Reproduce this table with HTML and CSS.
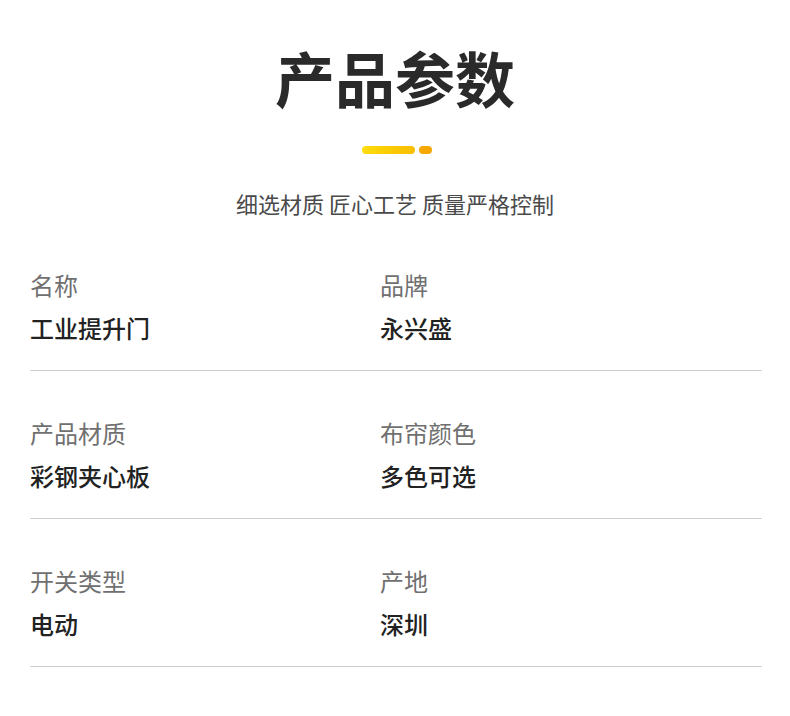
FILE: index.html
```html
<!DOCTYPE html>
<html lang="zh-CN">
<head>
<meta charset="utf-8">
<title>产品参数</title>
<link rel="stylesheet" href="styles.css">
</head>
<body>
<main class="page">
  <header class="head">
    <h1 class="title">产品参数</h1>
    <div class="deco"><span class="deco-bar"></span><span class="deco-dot"></span></div>
    <p class="subtitle">细选材质 匠心工艺 质量严格控制</p>
  </header>
  <section class="specs">
    <div class="row">
      <div class="cell"><div class="label">名称</div><div class="value">工业提升门</div></div>
      <div class="cell"><div class="label">品牌</div><div class="value">永兴盛</div></div>
    </div>
    <div class="row">
      <div class="cell"><div class="label">产品材质</div><div class="value">彩钢夹心板</div></div>
      <div class="cell"><div class="label">布帘颜色</div><div class="value">多色可选</div></div>
    </div>
    <div class="row">
      <div class="cell"><div class="label">开关类型</div><div class="value">电动</div></div>
      <div class="cell"><div class="label">产地</div><div class="value">深圳</div></div>
    </div>
  </section>
</main>
</body>
</html>
```
FILE: styles.css
```css
* { box-sizing: border-box; }
html, body { margin: 0; padding: 0; background: #fff; }
body {
  font-family: "Noto Sans CJK SC", "Noto Sans", sans-serif;
  color: #222;
}
.page { width: 790px; }
.head {
  display: flex;
  flex-direction: column;
  align-items: center;
  padding-top: 47px;
}
.title {
  margin: 0;
  font-size: 60px;
  line-height: 60px;
  font-weight: 700;
  color: #2a2a2a;
  letter-spacing: 0;
}
.deco {
  display: flex;
  gap: 4px;
  margin-top: 39px;
  margin-left: 4px;
}
.deco-bar {
  width: 53px;
  height: 8px;
  border-radius: 4px;
  background: linear-gradient(90deg, #ffdc0a, #f9bd00);
}
.deco-dot {
  width: 13px;
  height: 8px;
  border-radius: 4px;
  background: #f7a800;
}
.subtitle {
  margin: 38px 0 0;
  font-size: 22px;
  line-height: 22px;
  color: #4a4a4a;
}
.specs {
  margin: 9px 28px 0 30px;
}
.row {
  display: grid;
  grid-template-columns: 350px 1fr;
  padding: 50px 0 30px;
  border-bottom: 1px solid #cfcfcf;
}
.label {
  font-size: 24px;
  line-height: 24px;
  color: #707070;
}
.value {
  margin-top: 19px;
  font-size: 24px;
  line-height: 24px;
  font-weight: 500;
  color: #222;
}
```
